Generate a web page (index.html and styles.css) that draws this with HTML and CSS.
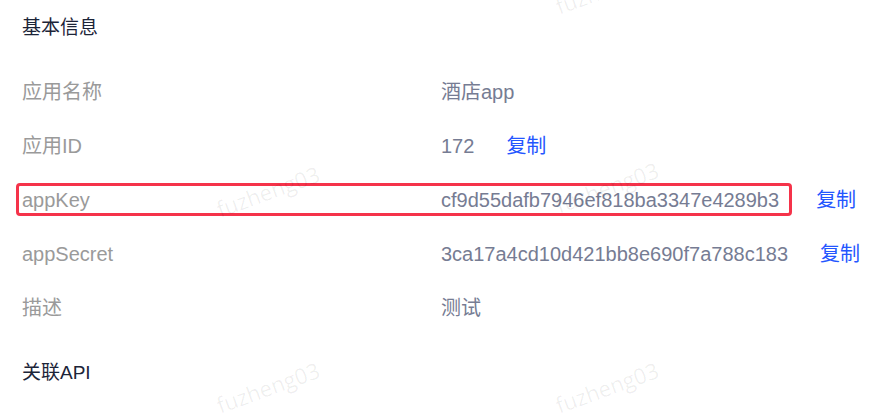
FILE: index.html
```html
<!DOCTYPE html>
<html lang="zh-CN">
<head>
    <meta charset="UTF-8">
    <meta name="viewport" content="width=device-width, initial-scale=1.0">
    <title>应用详情</title>
    <link rel="stylesheet" href="styles.css">
</head>
<body>
    <div class="page">
        <!-- Basic info -->
        <h2 class="section-title">基本信息</h2>

        <div class="info-list">
            <div class="info-row">
                <span class="label">应用名称</span>
                <span class="value">酒店app</span>
            </div>
            <div class="info-row">
                <span class="label">应用ID</span>
                <span class="value">172</span>
                <a href="#" class="copy">复制</a>
            </div>
            <div class="info-row">
                <div class="mark">
                    <span class="label">appKey</span>
                    <span class="value">cf9d55dafb7946ef818ba3347e4289b3</span>
                </div>
                <a href="#" class="copy">复制</a>
            </div>
            <div class="info-row">
                <span class="label">appSecret</span>
                <span class="value">3ca17a4cd10d421bb8e690f7a788c183</span>
                <a href="#" class="copy">复制</a>
            </div>
            <div class="info-row">
                <span class="label">描述</span>
                <span class="value">测试</span>
            </div>
        </div>

        <!-- Related API -->
        <h2 class="section-title related">关联API</h2>

        <!-- Watermark -->
        <div class="watermark wm-1">fuzheng03</div>
        <div class="watermark wm-2">fuzheng03</div>
        <div class="watermark wm-3">fuzheng03</div>
        <div class="watermark wm-4">fuzheng03</div>
        <div class="watermark wm-5">fuzheng03</div>
    </div>
</body>
</html>
```

FILE: styles.css
```css
/* Reset */
* {
    box-sizing: border-box;
    margin: 0;
    padding: 0;
}
body {
    font-family: "Liberation Sans", "Noto Sans CJK SC", sans-serif;
    background: #fff;
    overflow: hidden;
}
.page {
    position: relative;
    width: 877px;
    height: 418px;
    padding: 16px 0 0 22px;
}

/* Section titles */
.section-title {
    font-size: 19px;
    font-weight: normal;
    line-height: 24px;
    color: #1c2438;
}
.section-title.related {
    margin-top: 26px;
}

/* Info rows */
.info-list {
    margin-top: 25px;
}
.info-row {
    display: flex;
    align-items: center;
    padding: 15px 0;
    font-size: 20px;
    line-height: 24px;
}
.label {
    width: 419px;
    flex-shrink: 0;
    color: #9a9a9a;
}
.value {
    color: #767c93;
}
.copy {
    margin-left: 32px;
    color: #2456ff;
    text-decoration: none;
}

/* Highlighted row */
.mark {
    display: flex;
    margin: -5px -8px -4px -6px;
    padding: 2px 10px 1px 3px;
    border: 3px solid #f5334a;
    border-radius: 4px;
}

/* Watermark */
.watermark {
    position: absolute;
    font-family: "Open Sans", sans-serif;
    font-size: 22px;
    color: rgba(0, 0, 0, 0.065);
    transform: rotate(-20deg);
    pointer-events: none;
    white-space: nowrap;
}
.wm-1 { left: 214px; top: 176px; }
.wm-2 { left: 553px; top: 172px; }
.wm-3 { left: 214px; top: 372px; }
.wm-4 { left: 553px; top: 372px; }
.wm-5 { left: 553px; top: -27px; }
```
